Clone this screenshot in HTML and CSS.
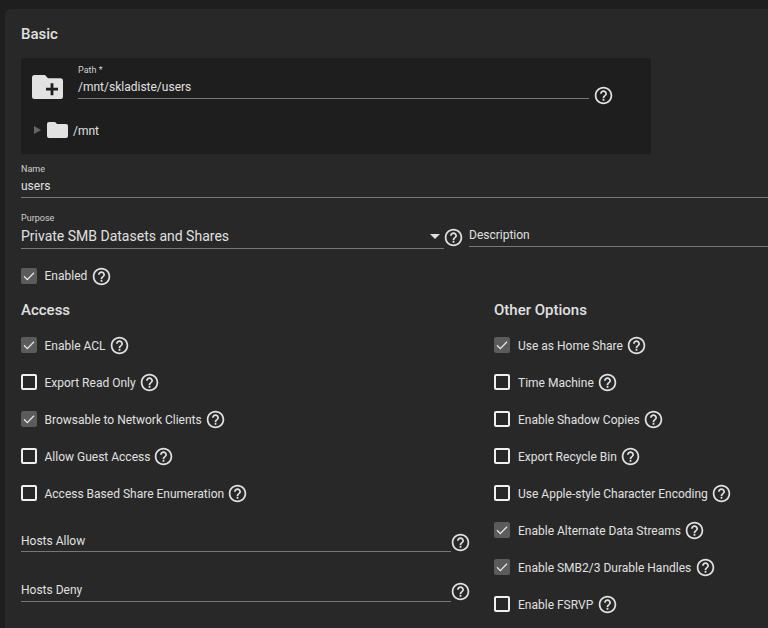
FILE: index.html
```html
<!DOCTYPE html>
<html lang="en">
<head>
<meta charset="utf-8">
<title>Basic</title>
<link rel="stylesheet" href="styles.css">
</head>
<body>
<svg class="defs" width="0" height="0" aria-hidden="true">
  <symbol id="help" viewBox="0 0 24 24"><path fill="currentColor" d="M11 18h2v-2h-2v2zm1-16C6.48 2 2 6.48 2 12s4.48 10 10 10 10-4.48 10-10S17.52 2 12 2zm0 18c-4.41 0-8-3.59-8-8s3.59-8 8-8 8 3.59 8 8-3.59 8-8 8zm0-14c-2.21 0-4 1.79-4 4h2c0-1.1.9-2 2-2s2 .9 2 2c0 2-3 1.75-3 5h2c0-2.25 3-2.5 3-5 0-2.21-1.79-4-4-4z"/></symbol>
  <symbol id="tick" viewBox="0 0 16 16"><path fill="none" stroke="#e8e8e8" stroke-width="1.3" d="M3 8.300l3.300 3.300L13 4.800"/></symbol>
</svg>
<main class="card">
  <h2 class="title">Basic</h2>
  <section class="explorer">
    <div class="path-row">
      <svg class="folder-add" viewBox="0 0 31 24"><path fill="#e2e2e2" d="M2.500 0H13l3 3.300h12.500A2.500 2.500 0 0 1 31 5.800v15.700a2.500 2.500 0 0 1-2.500 2.500h-26A2.500 2.500 0 0 1 0 21.500v-19A2.500 2.500 0 0 1 2.500 0z"/><path fill="#1e1e1e" d="M18.600 8.200h2.800v4.600H26v2.800h-4.600v4.600h-2.800v-4.600H14v-2.800h4.600z"/></svg>
      <div class="path-field">
        <span class="mini path-mini">Path *</span>
        <span class="path-value">/mnt/skladiste/users</span>
      </div>
      <svg class="help path-help"><use href="#help"/></svg>
    </div>
    <div class="tree-row">
      <span class="arrow"></span>
      <svg class="folder" viewBox="0 0 21 16"><path fill="#e2e2e2" d="M2 0h6l2 2h9a2 2 0 0 1 2 2v10a2 2 0 0 1-2 2H2a2 2 0 0 1-2-2V2a2 2 0 0 1 2-2z"/></svg>
      <span class="tree-label">/mnt</span>
    </div>
  </section>
  <div class="name-field">
    <span class="mini">Name</span>
    <span class="name-value">users</span>
  </div>
  <div class="purpose-row">
    <div class="purpose-field">
      <span class="mini">Purpose</span>
      <div class="select-value"><span>Private SMB Datasets and Shares</span><i class="caret"></i></div>
    </div>
    <svg class="help purpose-help"><use href="#help"/></svg>
    <div class="description">Description</div>
  </div>
  <label class="check enabled"><span class="box on"><svg><use href="#tick"/></svg></span><span>Enabled</span><svg class="help"><use href="#help"/></svg></label>
  <div class="columns">
    <div class="col-left">
      <h2 class="title section">Access</h2>
      <label class="check"><span class="box on"><svg><use href="#tick"/></svg></span><span>Enable ACL</span><svg class="help"><use href="#help"/></svg></label>
      <label class="check"><span class="box"></span><span>Export Read Only</span><svg class="help"><use href="#help"/></svg></label>
      <label class="check"><span class="box on"><svg><use href="#tick"/></svg></span><span>Browsable to Network Clients</span><svg class="help"><use href="#help"/></svg></label>
      <label class="check"><span class="box"></span><span>Allow Guest Access</span><svg class="help"><use href="#help"/></svg></label>
      <label class="check"><span class="box"></span><span>Access Based Share Enumeration</span><svg class="help"><use href="#help"/></svg></label>
      <div class="host-row first"><div class="host-field">Hosts Allow</div><svg class="help"><use href="#help"/></svg></div>
      <div class="host-row"><div class="host-field">Hosts Deny</div><svg class="help"><use href="#help"/></svg></div>
    </div>
    <div class="col-right">
      <h2 class="title section">Other Options</h2>
      <label class="check"><span class="box on"><svg><use href="#tick"/></svg></span><span>Use as Home Share</span><svg class="help"><use href="#help"/></svg></label>
      <label class="check"><span class="box"></span><span>Time Machine</span><svg class="help"><use href="#help"/></svg></label>
      <label class="check"><span class="box"></span><span>Enable Shadow Copies</span><svg class="help"><use href="#help"/></svg></label>
      <label class="check"><span class="box"></span><span>Export Recycle Bin</span><svg class="help"><use href="#help"/></svg></label>
      <label class="check"><span class="box"></span><span>Use Apple-style Character Encoding</span><svg class="help"><use href="#help"/></svg></label>
      <label class="check"><span class="box on"><svg><use href="#tick"/></svg></span><span>Enable Alternate Data Streams</span><svg class="help"><use href="#help"/></svg></label>
      <label class="check"><span class="box on"><svg><use href="#tick"/></svg></span><span>Enable SMB2/3 Durable Handles</span><svg class="help"><use href="#help"/></svg></label>
      <label class="check"><span class="box"></span><span>Enable FSRVP</span><svg class="help"><use href="#help"/></svg></label>
    </div>
  </div>
</main>
</body>
</html>
```
FILE: styles.css
```css
html, body {
  margin: 0;
  height: 628px;
  overflow: hidden;
  background: #1e1e1e;
}
body {
  padding: 9px 0 0 5px;
  box-sizing: border-box;
  font-family: Roboto, "Liberation Sans", sans-serif;
  color: #e0e0e0;
  font-size: 12px;
}
.defs { position: absolute; }
.card {
  width: 800px;
  height: 640px;
  box-sizing: border-box;
  padding: 16px 0 0 16px;
  background: #282828;
  border-radius: 6px 0 0 0;
}
.title {
  margin: 0;
  font-size: 15px;
  line-height: 18px;
  font-weight: 500;
  color: #e0e0e0;
}
.explorer {
  width: 630px;
  height: 96px;
  margin-top: 15px;
  background: #1e1e1e;
  display: flex;
  flex-direction: column;
}
.path-row {
  display: flex;
  align-items: flex-start;
  height: 48px;
  box-sizing: border-box;
  padding: 6px 0 0 11px;
}
.folder-add { width: 31px; height: 24px; margin-top: 11px; }
.path-field {
  width: 511px;
  margin-left: 15px;
  height: 34px;
  border-bottom: 1px solid #777;
}
.mini {
  display: block;
  font-size: 9px;
  line-height: 11px;
  color: #d0d0d0;
}
.path-mini { margin-top: 1px; }
.path-value {
  display: block;
  font-size: 12px;
  line-height: 15px;
  margin-top: 4px;
}
.help {
  display: block;
  width: 21px;
  height: 21px;
  flex: none;
  color: #e0e0e0;
}
.path-help { margin: 20.500px 0 0 4px; }
.tree-row {
  display: flex;
  align-items: center;
  padding: 16px 0 0 13px;
}
.arrow {
  width: 0;
  height: 0;
  border-left: 7px solid #666;
  border-top: 4px solid transparent;
  border-bottom: 4px solid transparent;
}
.folder { width: 21px; height: 16px; margin-left: 6px; }
.tree-label { margin: 2px 0 0 5px; font-size: 12px; line-height: 14px; }
.name-field {
  height: 33px;
  margin-top: 10px;
  border-bottom: 1px solid #777;
  width: 747px;
}
.name-value { display: block; font-size: 12px; line-height: 15px; margin-top: 4px; }
.purpose-row { display: flex; align-items: flex-start; margin-top: 15px; width: 747px; }
.purpose-field { width: 423px; height: 35px; border-bottom: 1px solid #777; flex: none; }
.select-value {
  display: flex;
  align-items: center;
  justify-content: space-between;
  font-size: 14px;
  line-height: 17px;
  margin-top: 4px;
  padding-right: 4px;
}
.caret {
  width: 0;
  height: 0;
  border-top: 5px solid #e0e0e0;
  border-left: 5px solid transparent;
  border-right: 5px solid transparent;
}
.purpose-help { margin: 13.500px 0 0 -1px; }
.description {
  flex: 1;
  height: 18px;
  margin: 9px 0 0 5px;
  padding-top: 6px;
  line-height: 15px;
  border-bottom: 1px solid #777;
}
.check {
  display: flex;
  align-items: center;
  height: 22px;
  margin-top: 15px;
  line-height: 15px;
}
.check > span:nth-child(2) { margin-left: 7.500px; }
.check .help { margin-left: 4px; }
.columns .check > span:nth-child(2) { padding-top: 2px; }
.col-left .check .help { margin-left: 3px; }
.col-right .check > span:nth-child(2) { margin-left: 8px; }
.col-right .check .help { margin-left: 3.500px; }
.enabled { margin-top: 16px; }
.box {
  width: 16px;
  height: 16px;
  box-sizing: border-box;
  flex: none;
  border: 2px solid #f0f0f0;
  border-radius: 2px;
}
.box.on { border: none; background: #5b5b5b; }
.box svg { display: block; width: 16px; height: 16px; }
.columns { display: flex; margin-top: 14px; }
.col-left { width: 473px; flex: none; }
.section { margin-bottom: 15px; }
.section + .check { margin-top: 0; }
.col-right { flex: 1; }
.host-row { display: flex; align-items: flex-start; width: 448px; margin-top: 30px; }
.host-row.first { margin-top: 29px; }
.host-field {
  width: 430px;
  height: 18px;
  line-height: 15px;
  border-bottom: 1px solid #777;
  flex: none;
}
.first .host-field { height: 17px; padding-top: 1px; }
.host-row .help { margin: -1.500px 0 0 -1px; }
```
